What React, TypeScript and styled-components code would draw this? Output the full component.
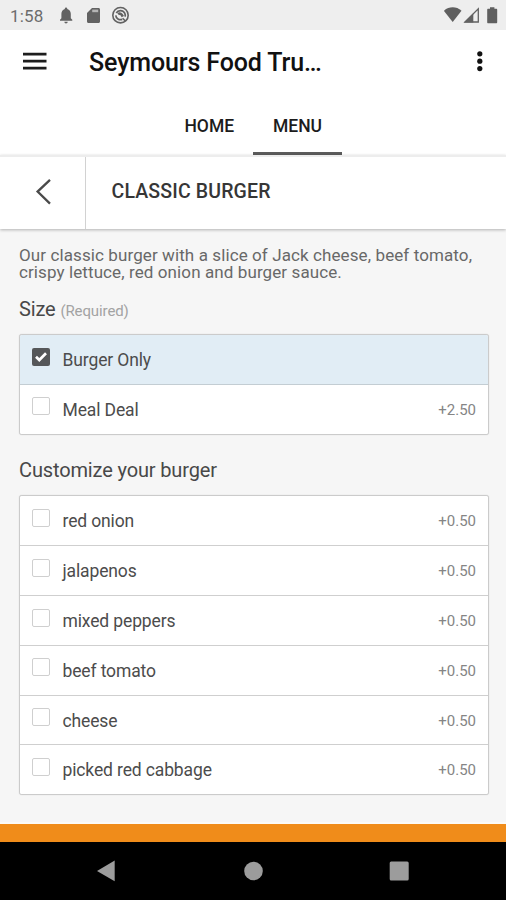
import React, { useState } from "react";
import styled, { createGlobalStyle } from "styled-components";

const GlobalStyle = createGlobalStyle`
  * { box-sizing: border-box; }
  body { margin: 0; background: #f6f6f6; font-family: Roboto, "Liberation Sans", sans-serif; }
  button { font: inherit; }
`;

const Screen = styled.div`
  width: 506px;
  height: 900px;
  display: flex;
  flex-direction: column;
  background: #f6f6f6;
  overflow: hidden;
`;

const StatusBar = styled.div`
  height: 30px;
  flex: none;
  display: flex;
  background: #eee;
  color: #6c6c6c;
`;

const Clock = styled.span`
  width: 60px;
  padding-left: 10px;
  font-size: 17px;
  line-height: 32px;
  letter-spacing: 0.15px;
`;

const AppBar = styled.header`
  height: 68px;
  flex: none;
  display: flex;
  align-items: flex-start;
  background: #fff;
`;

const IconButton = styled.button<{ $width: number }>`
  width: ${(p) => p.$width}px;
  height: 64px;
  padding: 0;
  border: 0;
  background: none;
  display: block;
  svg { display: block; }
`;

const Title = styled.h1`
  margin: 0;
  flex: 1;
  font-size: 25px;
  font-weight: 500;
  line-height: 66px;
  letter-spacing: -0.12px;
  color: #111;
`;

const Tabs = styled.nav`
  height: 57px;
  flex: none;
  display: flex;
  justify-content: center;
  padding-left: 1px;
  background: #fff;
`;

const Tab = styled.a<{ $active?: boolean; $width: number }>`
  width: ${(p) => p.$width}px;
  text-align: center;
  font-size: 17.5px;
  font-weight: 500;
  line-height: 56px;
  color: #1c1c1c;
  border-bottom: 3px solid ${(p) => (p.$active ? "#5c5c5c" : "transparent")};
`;

const SubHeader = styled.div`
  height: 74px;
  flex: none;
  display: flex;
  background: #fff;
  border-top: 2px solid #ededed;
  box-shadow: 0 1px 3px rgba(0, 0, 0, 0.28);
`;

const BackButton = styled(IconButton)`
  height: 100%;
  border-right: 1.5px solid #d2d2d2;
`;

const SubTitle = styled.h2`
  margin: 0 0 0 25.5px;
  font-size: 19.5px;
  font-weight: 500;
  line-height: 70px;
  letter-spacing: 0.15px;
  color: #363636;
`;

const Content = styled.main`
  flex: 1;
  padding: 18px 17px 0 19px;
`;

const Description = styled.p`
  margin: 0;
  font-size: 17px;
  line-height: 17px;
  letter-spacing: 0.1px;
  color: #686868;
  white-space: nowrap;
`;

const GroupTitle = styled.h3<{ $top: number }>`
  margin: ${(p) => p.$top}px 0 0;
  height: 39px;
  font-size: 20px;
  font-weight: 400;
  line-height: 29px;
  letter-spacing: -0.14px;
  color: #484848;
`;

const Hint = styled.small`
  font-size: 15px;
  letter-spacing: -0.1px;
  color: #a3a3a3;
`;

const OptionList = styled.div`
  border: 1px solid #cbcbcb;
  border-radius: 3px;
  background: #fff;
  box-shadow: 0 0 1px rgba(0, 0, 0, 0.22);
  overflow: hidden;
`;

const Option = styled.div<{ $checked: boolean }>`
  height: 49.8px;
  display: flex;
  padding: 0 12px;
  background: ${(p) => (p.$checked ? "#e1edf5" : "#fff")};
  border-bottom: 1px solid ${(p) => (p.$checked ? "#c3cdd3" : "#cfcfcf")};
  &:last-child { border-bottom: 0; height: 48.8px; }
`;

const CheckBox = styled.button<{ $checked: boolean }>`
  width: 18px;
  height: 18px;
  margin: 12.7px 12.5px 0 0;
  padding: 0;
  border: ${(p) => (p.$checked ? "0" : "1.5px solid #cfcfcf")};
  border-radius: 2px;
  background: ${(p) => (p.$checked ? "#555759" : "#fff")};
  svg { display: block; }
`;

const OptionName = styled.span`
  flex: 1;
  font-size: 17.5px;
  line-height: 50px;
  letter-spacing: -0.13px;
  color: #4c4c4c;
`;

const Price = styled.span`
  font-size: 15px;
  line-height: 50px;
  color: #858585;
`;

const OrderBar = styled.div`
  height: 20px;
  flex: none;
  background: #f08c1a;
  border-top: 2px solid #fcfaf6;
`;

const SystemNav = styled.div`
  height: 58px;
  flex: none;
  background: #000;
`;

type Item = { name: string; price?: string; checked?: boolean };

const sizes: Item[] = [
  { name: "Burger Only", checked: true },
  { name: "Meal Deal", price: "+2.50" },
];

const extras: Item[] = [
  "red onion",
  "jalapenos",
  "mixed peppers",
  "beef tomato",
  "cheese",
  "picked red cabbage",
].map((name) => ({ name, price: "+0.50" }));

function OptionRow({ item }: { item: Item }) {
  const [checked, setChecked] = useState(!!item.checked);
  return (
    <Option $checked={checked}>
      <CheckBox $checked={checked} aria-label={item.name} onClick={() => setChecked(!checked)}>
        {checked && (
          <svg width="18" height="18" viewBox="0 0 18 18" fill="none" stroke="#fff" strokeWidth="2.7">
            <path d="M4 8.7 7.3 12 14 5.3" />
          </svg>
        )}
      </CheckBox>
      <OptionName>{item.name}</OptionName>
      {item.price && <Price>{item.price}</Price>}
    </Option>
  );
}

export default function App() {
  return (
    <>
      <GlobalStyle />
      <Screen>
        <StatusBar>
          <Clock>1:58</Clock>
          <svg width="384" height="30" viewBox="60 0 384 30">
            <path fill="#626262" d="M66 7.6c.8 0 1.3.6 1.3 1.4 2.2.6 3.5 2.6 3.5 4.8v4.4l1.5 1.6v1H59.9v-1l1.5-1.6v-4.4c0-2.2 1.3-4.2 3.4-4.8 0-.8.5-1.4 1.2-1.4ZM64.4 21.8h3.3c0 .9-.8 1.6-1.7 1.6s-1.6-.7-1.6-1.6Z" />
            <path fill="#626262" d="M92 8h6.5c.9 0 1.5.6 1.5 1.5v12c0 .9-.6 1.5-1.5 1.5h-10c-.9 0-1.5-.6-1.5-1.5V13Z" />
            <path fill="#b5b5b5" d="M92.2 9.6h6v2.6h-6z" />
            <g fill="none" stroke="#626262">
              <circle cx="120.5" cy="15.2" r="7.7" strokeWidth="1.6" />
              <path strokeWidth="1.7" d="M116.3 13c1.8-3.2 6.6-3.2 8.4.2.6 1.2.7 2.3.4 3.4M115.8 15.4c.2 3.2 3.4 5 6.4 4" />
              <path strokeWidth="2.6" d="M118.2 14.2c1.6-1.2 3.4-.2 4.6 2.4" />
              <path strokeWidth="1.6" d="m122.6 18.2 3 3" />
            </g>
          </svg>
          <svg width="62" height="30" viewBox="444 0 62 30">
            <path fill="#5f5f5f" d="M443.8 10.8c5.3-4.6 12.5-4.6 17.7 0L452.7 22Z" />
            <path fill="none" stroke="#626262" strokeWidth="1.3" d="M465 22 478.3 8.7V22Z" />
            <path fill="#626262" d="m464 22.6 9.3-9.3v9.3Z" />
            <path fill="#5f5f5f" d="M490 7.2h4.4v1.6h1.8c.6 0 1 .4 1 1v12.4c0 .6-.4 1-1 1h-8c-.6 0-1-.4-1-1V9.8c0-.6.4-1 1-1h1.8Z" />
          </svg>
        </StatusBar>
        <AppBar>
          <IconButton $width={89} aria-label="Open navigation">
            <svg width="89" height="64" fill="#1d1d1d">
              <path d="M23 22.8h23.5v2.6H23zM23 29.8h23.5v2.6H23zM23 36.8h23.5v2.6H23z" />
            </svg>
          </IconButton>
          <Title>Seymours Food Tru…</Title>
          <IconButton $width={53} aria-label="More options">
            <svg width="53" height="64" fill="#111">
              <circle cx="26.8" cy="23.8" r="2.6" />
              <circle cx="26.8" cy="31.2" r="2.6" />
              <circle cx="26.8" cy="38.6" r="2.6" />
            </svg>
          </IconButton>
        </AppBar>
        <Tabs>
          <Tab $width={88}>HOME</Tab>
          <Tab $width={88.5} $active>MENU</Tab>
        </Tabs>
        <SubHeader>
          <BackButton $width={86} aria-label="Back">
            <svg width="85" height="72" fill="none" stroke="#4a4a4a" strokeWidth="2.3">
              <path d="M50 22.8 37.6 34.6 50 46.6" />
            </svg>
          </BackButton>
          <SubTitle>CLASSIC BURGER</SubTitle>
        </SubHeader>
        <Content>
          <Description>
            Our classic burger with a slice of Jack cheese, beef tomato,
            <br />
            crispy lettuce, red onion and burger sauce.
          </Description>
          <GroupTitle $top={14}>
            Size <Hint>(Required)</Hint>
          </GroupTitle>
          <OptionList>
            {sizes.map((item) => (
              <OptionRow key={item.name} item={item} />
            ))}
          </OptionList>
          <GroupTitle $top={21.8}>Customize your burger</GroupTitle>
          <OptionList>
            {extras.map((item) => (
              <OptionRow key={item.name} item={item} />
            ))}
          </OptionList>
        </Content>
        <OrderBar />
        <SystemNav>
          <svg width="506" height="58" viewBox="0 842 506 58" fill="#9c9c9c">
            <path d="M97 871 114.7 860.5v20.8Z" />
            <circle cx="253.5" cy="871" r="9.3" />
            <rect x="389.7" y="861.5" width="19" height="19" rx="1.5" />
          </svg>
        </SystemNav>
      </Screen>
    </>
  );
}
